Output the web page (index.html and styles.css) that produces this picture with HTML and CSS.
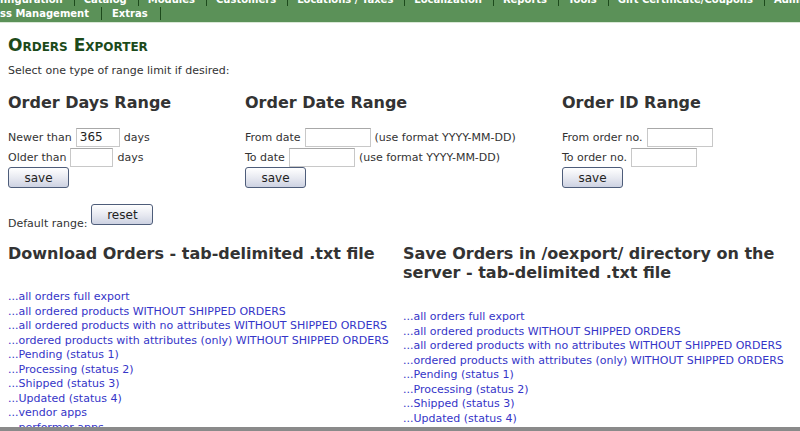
FILE: index.html
```html
<!DOCTYPE html>
<html>
<head>
<meta charset="utf-8">
<link rel="stylesheet" href="styles.css">
</head>
<body>
<div class="nav">
  <div class="nav-row r1">
    <span class="item first">nfiguration</span><span class="item">Catalog</span><span class="item">Modules</span><span class="item">Customers</span><span class="item">Locations / Taxes</span><span class="item">Localization</span><span class="item">Reports</span><span class="item">Tools</span><span class="item">Gift Certificate/Coupons</span><span class="item">Admin</span>
  </div>
  <div class="nav-row r2">
    <span class="item first">ss Management</span><span class="item">Extras</span>
  </div>
</div>
<div class="main">
  <h1 class="title">Orders Exporter</h1>
  <p class="intro">Select one type of range limit if desired:</p>
  <div class="ranges">
    <div class="range">
      <h2>Order Days Range</h2>
      <div class="row">Newer than <input class="in days1" type="text" value="365"> days</div>
      <div class="row">Older than <input class="in days2" type="text"> days</div>
      <button class="btn">save</button>
    </div>
    <div class="range">
      <h2>Order Date Range</h2>
      <div class="row">From date <input class="in date" type="text"> (use format YYYY-MM-DD)</div>
      <div class="row">To date <input class="in date" type="text"> (use format YYYY-MM-DD)</div>
      <button class="btn">save</button>
    </div>
    <div class="range">
      <h2>Order ID Range</h2>
      <div class="row">From order no. <input class="in date" type="text"></div>
      <div class="row">To order no. <input class="in date" type="text"></div>
      <button class="btn">save</button>
    </div>
  </div>
  <div class="default"><span class="default-label">Default range:</span> <button class="btn reset">reset</button></div>
  <div class="exports">
    <div class="col left">
      <h2>Download Orders - tab-delimited .txt file</h2>
      <ul class="links">
        <li><a href="#">...all orders full export</a></li>
        <li><a href="#">...all ordered products WITHOUT SHIPPED ORDERS</a></li>
        <li><a href="#">...all ordered products with no attributes WITHOUT SHIPPED ORDERS</a></li>
        <li><a href="#">...ordered products with attributes (only) WITHOUT SHIPPED ORDERS</a></li>
        <li><a href="#">...Pending (status 1)</a></li>
        <li><a href="#">...Processing (status 2)</a></li>
        <li><a href="#">...Shipped (status 3)</a></li>
        <li><a href="#">...Updated (status 4)</a></li>
        <li><a href="#">...vendor apps</a></li>
        <li><a href="#">...performer apps</a></li>
      </ul>
    </div>
    <div class="col right">
      <h2>Save Orders in /oexport/ directory on the server - tab-delimited .txt file</h2>
      <ul class="links">
        <li><a href="#">...all orders full export</a></li>
        <li><a href="#">...all ordered products WITHOUT SHIPPED ORDERS</a></li>
        <li><a href="#">...all ordered products with no attributes WITHOUT SHIPPED ORDERS</a></li>
        <li><a href="#">...ordered products with attributes (only) WITHOUT SHIPPED ORDERS</a></li>
        <li><a href="#">...Pending (status 1)</a></li>
        <li><a href="#">...Processing (status 2)</a></li>
        <li><a href="#">...Shipped (status 3)</a></li>
        <li><a href="#">...Updated (status 4)</a></li>
      </ul>
    </div>
  </div>
</div>
<div class="winbar"></div>
</body>
</html>
```
FILE: styles.css
```css
html, body {
  margin: 0;
  padding: 0;
  background: #fff;
  font-family: "DejaVu Sans", Verdana, sans-serif;
  font-size: 11px;
  color: #333;
  overflow: hidden;
}
.nav {
  background: #5b9158;
  height: 22px;
  overflow: hidden;
  border-bottom: 1px solid #d9e8d6;
}
.nav-row {
  display: flex;
  white-space: nowrap;
  font-weight: bold;
  color: #fff;
  font-size: 10px;
  line-height: 13px;
}
.r1 { margin-top: -7px; }
.r2 { margin-top: 1px; }
.item {
  padding: 0 12px 0 10px;
  border-right: 1px solid #1d4a1c;
}
.r1 .item { padding: 0 11px 0 9px; }
.item.first, .r1 .item.first { padding-left: 0; }
.main {
  padding: 0 8px;
}
.title {
  margin: 13px 0 0 0;
  font-size: 17px;
  font-variant: small-caps;
  font-weight: bold;
  color: #1c4a1a;
  line-height: 18px;
}
.intro {
  margin: 10px 0 0 0;
  line-height: 14px;
}
.ranges {
  display: grid;
  grid-template-columns: 237px 317px auto;
  margin-top: 15px;
}
.range h2, .col h2 {
  margin: 0;
  font-size: 16px;
  font-weight: bold;
  color: #333;
  line-height: 20px;
}
.range h2 { margin-bottom: 14px; }
.row {
  height: 20px;
  display: flex;
  align-items: center;
  gap: 3px;
  white-space: nowrap;
}
.in {
  box-sizing: border-box;
  height: 19px;
  border: 1px solid #c8c8c8;
  border-top-color: #a8a8a8;
  padding: 0 3px;
  font-family: "DejaVu Sans", Verdana, sans-serif;
  font-size: 12px;
  color: #222;
  margin: 0 1px;
}
.days1 { width: 44px; }
.days2 { width: 43px; }
.date { width: 66px; }
.btn {
  box-sizing: border-box;
  width: 61px;
  height: 21px;
  border: 1px solid #4e5d7a;
  border-radius: 3px;
  background: linear-gradient(#ffffff, #e6e8f0 55%, #cdd2e2);
  font-family: "DejaVu Sans", Verdana, sans-serif;
  font-size: 12px;
  color: #222;
  padding: 0;
  margin: 0;
  display: block;
}
.default {
  margin-top: 16px;
  display: flex;
  align-items: flex-end;
  gap: 4px;
}
.default-label {
  margin-bottom: -5px;
}
.default .reset {
  width: 62px;
  margin: 0;
}
.exports {
  display: grid;
  grid-template-columns: 395px auto;
  margin-top: 19px;
}
.col h2 { line-height: 19px; }
.links {
  list-style: none;
  margin: 27px 0 0 0;
  padding: 0;
  line-height: 14.5px;
}
.right .links { margin-top: 28px; }
.links a {
  color: #3535c8;
  text-decoration: none;
}
.winbar {
  position: fixed;
  left: 0;
  right: 0;
  bottom: 0;
  height: 4px;
  background: #8a8a8a;
}
```
